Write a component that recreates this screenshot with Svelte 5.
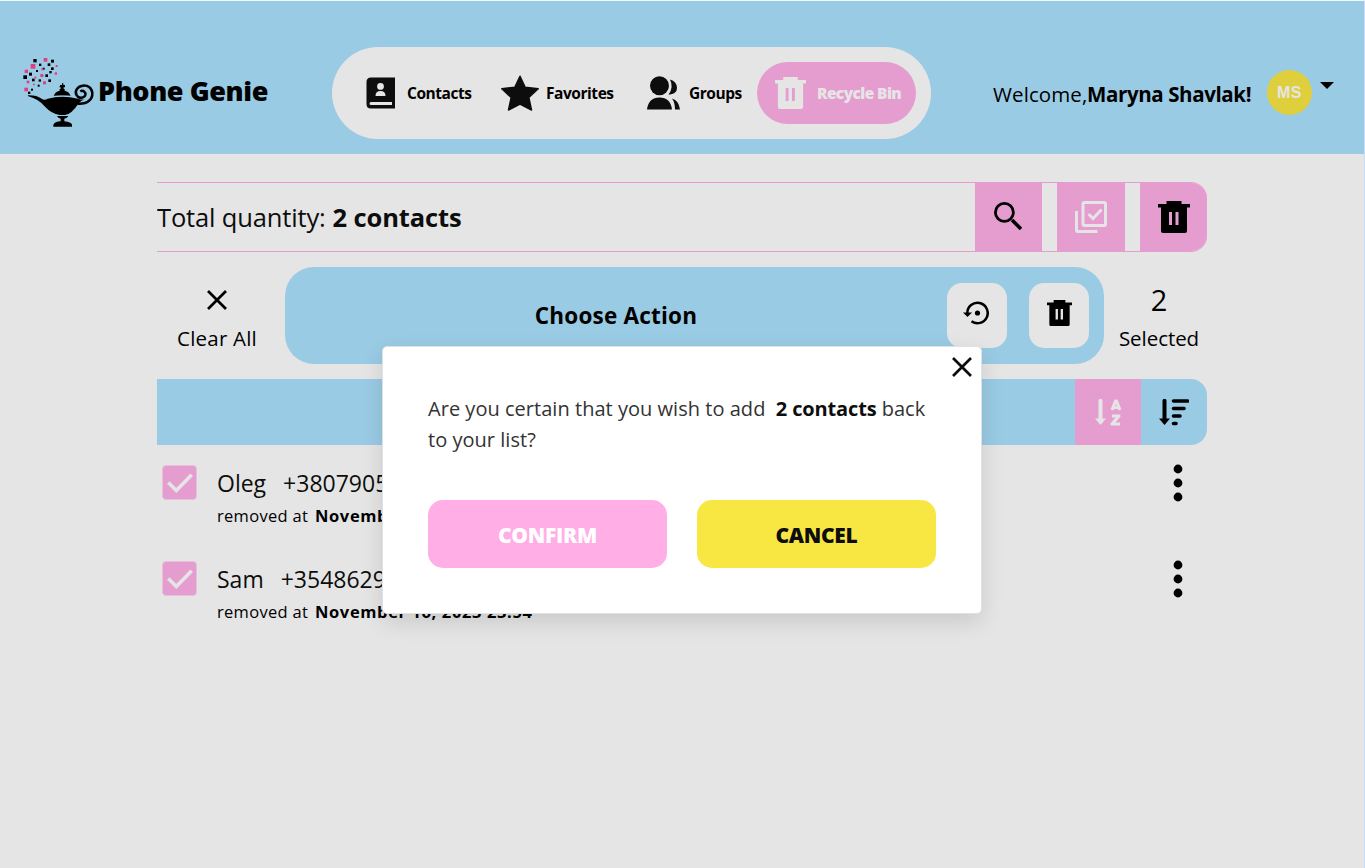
<script>
  const contacts = [
    { name: 'Oleg', phone: '+380790512345', removed: 'November 16, 2023 23:54' },
    { name: 'Sam', phone: '+354862945678', removed: 'November 16, 2023 23:54' }
  ];
  const sparks = [
    [55, 27, 10], [98, 40, 8], [83, 53, 6], [108, 29, 9], [72, 41, 7], [63, 60, 6], [108, 52, 8], [103, 63, 7],
    [42, 68, 9], [25, 76, 11], [91, 73, 8], [71, 88, 7], [51, 86, 8], [100, 88, 8], [68, 104, 6], [48, 116, 6], [39, 125, 7]
  ];
  const embers = [
    [86, 24, 11], [47, 42, 14], [122, 45, 6], [79, 55, 6], [29, 59, 10], [119, 67, 7], [76, 72, 9], [58, 80, 6],
    [35, 92, 8], [84, 94, 9], [54, 101, 5], [28, 113, 11]
  ];
</script>

{#snippet trash(w, h)}
  <svg width={w} height={h} viewBox="0 0 32 32" preserveAspectRatio="none" fill="currentColor">
    <path fill-rule="evenodd" d="M8.500 0h15v3H32v3.500h-3V30q0 2-2 2H5q-2 0-2-2V6.500H0V3h8.500zM11 11v13h3V11zM17.500 11v13h3V11z" />
  </svg>
{/snippet}

{#snippet cross(size)}
  <svg width={size} height={size} viewBox="0 0 20 20" fill="none" stroke="currentColor" stroke-width="2.7"><path d="M1 1l18 18M19 1L1 19" /></svg>
{/snippet}

<div class="page">
  <header>
    <div class="brand">
      <svg width="80" height="85" viewBox="0 0 240 255">
        {#each sparks as [x, y, s]}<rect {x} {y} width={s} height={s} />{/each}
        {#each embers as [x, y, s]}<rect {x} {y} width={s} height={s} fill="#e23c82" />{/each}
        <path d="M136 105h5v-5h4v5h5v7h-4v5h3v5q14 3 18 16h-51q4-13 18-16v-5h3v-5h-4z" />
        <path d="M38 136q26-1 42 10 8 6 18 0 43-12 91 0 12 5 21 1-13 5-20 14-20 31-40 34h-16q-25-4-43-24-20-24-51-32z" />
        <path d="M126 198h34q-3 6-12 8v8q20 2 23 10v6h-56v-6q4-9 22-10v-8q-8-2-11-8z" />
        <path d="M188 162c31 2 45-14 44-32-1-15-13-24-29-22-17 2-25 18-18 29 6 11 23 9 26-1 2-9-7-16-15-11" fill="none" stroke="#000" stroke-width="7.500" transform="translate(0 -1)" />
        <path d="M101 142q41-11 85 0" fill="none" stroke="#9acbe4" stroke-width="2" />
      </svg>
      <span class="brand-name">Phone Genie</span>
    </div>

    <nav>
      <a class="item contacts" href="#contacts">
        <span class="icon"><svg width="29" height="32" viewBox="0 0 29 32" fill="#0d0d0d"><path fill-rule="evenodd" d="M5 .5h24v31H5q-4.500 0-4.500-4.500V5Q.5.5 5 .5zM5 25q-1.500 0-1.500 1.500T5 28h21v-3zM14.500 6a3.400 3.400 0 100 6.800 3.400 3.400 0 000-6.800zM9.500 19h10q0-5-5-5t-5 5z" /></svg></span>
        <span class="label">Contacts</span>
      </a>
      <a class="item favorites" href="#favorites">
        <span class="icon"><svg width="38" height="36" viewBox="0 0 38 36" fill="#0d0d0d" stroke="#0d0d0d" stroke-width="1.500" stroke-linejoin="round"><path d="M19 1.200l5.200 11 13 1.600-9.400 8.700L30.500 35 19 29.200 7.500 35l2.700-12.500L.8 13.800l13-1.600z" /></svg></span>
        <span class="label">Favorites</span>
      </a>
      <a class="item groups" href="#groups">
        <span class="icon"><svg width="33" height="34" viewBox="0 0 33 34" fill="#0d0d0d"><circle cx="12.500" cy="9.700" r="9.500" /><path d="M0 33.500Q1.500 21.500 12.500 21.500T25 33.500zM21.500 18.700Q27 11.500 23 3.500q7 2 7 8.500 0 6-8.500 6.700zM25 22.500q7 2 8 11h-5q0-7-3-11z" /></svg></span>
        <span class="label">Groups</span>
      </a>
      <a class="item bin" href="#bin">
        <span class="icon">{@render trash(31, 32)}</span>
        <span class="label">Recycle Bin</span>
      </a>
    </nav>

    <div class="user">
      <span class="welcome">Welcome,</span><b>Maryna Shavlak!</b>
      <span class="avatar">MS</span>
      <svg class="caret" width="14" height="7" viewBox="0 0 14 7"><path d="M0 0h14L7 7z" /></svg>
    </div>
  </header>

  <main>
    <section class="summary">
      <p><span class="total">Total quantity:</span> <b>2 contacts</b></p>
      <button class="search" aria-label="Search"><svg width="28" height="28" viewBox="0 0 28 28" fill="none" stroke="#000"><circle cx="10.400" cy="10.400" r="9" stroke-width="2.800" /><path d="M18 18l9 9" stroke-width="3.600" /></svg></button>
      <button class="select" aria-label="Select all"><svg width="32" height="32" viewBox="0 0 32 32" fill="none" stroke="#e5e5e5" stroke-width="3"><rect x="8" y="1.500" width="22.500" height="23" rx="1.500" /><path d="M1.500 10v19q0 1.500 1.500 1.500h19.500M13.500 13l4.500 4.500 8.500-9" /></svg></button>
      <button class="remove" aria-label="Delete">{@render trash(32, 32)}</button>
    </section>

    <section class="actions">
      <button class="clear">{@render cross(20)}<span>Clear All</span></button>
      <div class="action-bar">
        <h2>Choose Action</h2>
        <button class="restore" aria-label="Restore"><svg width="26" height="24" viewBox="0 0 26 24"><path d="M4.300 12A10.200 10.200 0 1 1 8.500 20.300" fill="none" stroke="#000" stroke-width="2.500" /><path d="M0 11.500h9L4.500 16z" /><circle cx="14.500" cy="12" r="2.600" /></svg></button>
        <button aria-label="Delete selected">{@render trash(25, 26)}</button>
      </div>
      <div class="selected"><strong>2</strong><span>Selected</span></div>
    </section>

    <section class="sorting">
      <button class="alpha" aria-label="Sort by name"><svg width="27" height="27" viewBox="0 0 27 27" fill="none" stroke="#e5e5e5"><path d="M5.500 1.800v19" stroke-width="4" stroke-linecap="round" /><path d="M0 19.500h11L5.500 26z" fill="#e5e5e5" stroke="none" /><path d="M17 11l3.500-9h1L25 11M18 8.500h6M17 17h7l-7 8h8" stroke-width="3.100" stroke-linejoin="round" /></svg></button>
      <button class="date" aria-label="Sort by date"><svg width="30" height="27" viewBox="0 0 30 27" fill="none" stroke="#000"><path d="M5.500 1.800v19" stroke-width="4" stroke-linecap="round" /><path d="M0 19.500h11L5.500 26z" fill="#000" stroke="none" /><path d="M14.500 2H28.500M14.500 9.500h10.500M14.500 17H21M14.500 24.500h2.500" stroke-width="3.600" stroke-linecap="round" /></svg></button>
    </section>

    <ul>
      {#each contacts as c}
        <li>
          <span class="check"><svg width="26" height="20" viewBox="0 0 26 20" fill="none" stroke="#e5e5e5" stroke-width="3.600"><path d="M1.300 9.500l8 8L24.700 1.700" /></svg></span>
          <div class="details">
            <p class="who"><span>{c.name}</span><span>{c.phone}</span></p>
            <p class="when"><span class="at">removed at</span><b>{c.removed}</b></p>
          </div>
          <svg class="more" width="10" height="38" viewBox="0 0 10 38"><circle cx="5" cy="5" r="4.400" /><circle cx="5" cy="19" r="4.400" /><circle cx="5" cy="33" r="4.400" /></svg>
        </li>
      {/each}
    </ul>
  </main>

  <div class="modal" role="dialog" aria-modal="true">
    <button class="close" aria-label="Close">{@render cross(20)}</button>
    <p>Are you certain that you wish to add &nbsp;<b>2 contacts</b> back<br />to your list?</p>
    <div class="buttons">
      <button class="confirm">CONFIRM</button>
      <button class="cancel">CANCEL</button>
    </div>
  </div>
</div>

<style>
  :global(body) { background: #e5e5e5; }
  * { box-sizing: border-box; }
  p, h2, ul { margin: 0; padding: 0; }
  button { border: 0; padding: 0; background: none; color: inherit; font: inherit; display: flex; align-items: center; justify-content: center; flex: none; }
  svg { display: block; flex: none; }
  .page { position: relative; height: 868px; overflow: hidden; border-top: 1px solid #f3f7fa; border-right: 1px solid #c9dcf5; font-family: "Open Sans", "Noto Sans", sans-serif; color: #0d0d0d; white-space: nowrap; }

  header { display: flex; height: 153px; background: #9acbe4; color: #000; }
  .brand { display: flex; width: 332px; padding: 49px 0 0 15px; flex: none; }
  .brand-name { margin: 23px 0 0 3px; font-size: 27px; line-height: 36px; font-weight: 800; letter-spacing: -.4px; }
  nav { display: flex; align-items: center; flex: none; width: 599px; height: 92px; margin-top: 46px; padding: 0 15px; border-radius: 46px; background: #e5e5e5; }
  .item { display: flex; align-items: center; gap: 7px; height: 62px; padding: 0 0 1px 13px; color: #000; text-decoration: none; font-size: 15.500px; font-weight: 700; border-radius: 31px; letter-spacing: -.45px; }
  .contacts { width: 139px; }
  .favorites { width: 143px; }
  .groups { width: 128px; }
  .favorites .icon { padding-left: 1px; }
  .groups .icon { padding-left: 3px; }
  .bin { width: 159px; background: #e59dd0; color: #e5e5e5; font-weight: 800; letter-spacing: -.6px; }
  .icon { width: 40px; display: flex; justify-content: center; flex: none; }
  .user { display: flex; margin-left: 62px; padding-top: 69px; font-size: 20.500px; line-height: 49px; letter-spacing: -.38px; }
  .welcome { width: 94px; letter-spacing: .1px; }
  .user b { width: 180px; }
  .avatar { width: 45px; height: 45px; border-radius: 50%; background: #dfcf3c; color: #e5e5e5; text-align: center; font: 700 16px/46px "Liberation Sans", Arial, sans-serif; letter-spacing: .5px; }
  .caret { margin: 12px 0 0 8px; }

  main { width: 1050px; margin: 28px 0 0 157px; }
  .summary { display: flex; height: 70px; border: solid #e59dd0; border-width: 1px 0; border-radius: 0 16px 16px 0; overflow: hidden; font-size: 25.500px; letter-spacing: -.12px; }
  .summary p { width: 818px; line-height: 68px; }
  .total { display: inline-block; width: 169px; letter-spacing: -.15px; }
  .summary button { height: 68px; background: #e59dd0; }
  .search { width: 67px; }
  .search svg { margin: -2px 2px 0 0; }
  .select { width: 68px; margin: 0 15px; }
  .remove { width: 67px; color: #000; }
  .actions { display: flex; height: 97px; margin-top: 15px; font-size: 20.500px; color: #000; }
  .clear { width: 120px; margin-right: 8px; flex-direction: column; justify-content: flex-start; padding-top: 23px; }
  .clear span { line-height: 28px; margin-top: 14px; letter-spacing: .2px; }
  .action-bar { display: flex; flex: none; width: 819px; padding: 16px 15px 0 0; border-radius: 29px; background: #9acbe4; color: #000; }
  .action-bar h2 { width: 662px; font-size: 22.500px; line-height: 66px; text-align: center; letter-spacing: .2px; }
  .action-bar button { width: 60px; height: 65px; padding-bottom: 5px; border-radius: 15px; background: #e5e5e5; }
  .action-bar .restore { padding-right: 3px; }
  .action-bar button + button { margin-left: 22px; }
  .selected { width: 110px; flex: none; display: flex; flex-direction: column; align-items: center; letter-spacing: -.05px; }
  .selected strong { font-size: 29px; line-height: 34px; font-weight: 400; margin-top: 16px; }
  .selected span { line-height: 28px; margin-top: 7px; }
  .sorting { display: flex; justify-content: flex-end; height: 66px; margin-top: 15px; border-radius: 0 16px 16px 0; background: #9acbe4; overflow: hidden; }
  .sorting button { width: 66px; }
  .alpha { background: #e59dd0; }
  ul { list-style: none; padding-top: 16px; }
  li { display: flex; height: 96px; padding-left: 5px; }
  .check { display: flex; align-items: center; justify-content: center; width: 35px; height: 35px; margin-top: 4px; border: 1px solid #e5c1db; border-radius: 4px; background: #e59dd0; flex: none; }
  .details { width: 975px; padding-left: 20px; flex: none; }
  .who { display: flex; gap: 17px; font-size: 23px; line-height: 32px; padding-top: 6px; letter-spacing: 0; }
  .when { display: flex; font-size: 16.500px; line-height: 24px; padding-top: 5px; letter-spacing: .62px; color: #000; }
  .at { width: 98px; letter-spacing: .3px; }
  .more { margin: 3px 0 0 .5px; }

  .modal { position: absolute; left: 382px; top: 345px; width: 600px; height: 268px; padding: 46px 45px 0; border: 1px solid #dce3e6; border-radius: 5px; background: #fff; box-shadow: 0 8px 22px rgba(0, 0, 0, .12); }
  .close { position: absolute; right: 9px; top: 10px; }
  .modal p { font-size: 20px; line-height: 31px; letter-spacing: .03px; color: #333; }
  .modal b { color: #0d0d0d; letter-spacing: -.15px; }
  .buttons { display: flex; gap: 30px; margin-top: 45px; }
  .buttons button { width: 239px; height: 68px; border-radius: 15px; font-size: 21px; font-weight: 800; padding-top: 1px; letter-spacing: -.3px; }
  .confirm { background: #ffaee6; color: #fff; }
  .cancel { background: #f8e643; color: #0d0d0d; }
</style>
